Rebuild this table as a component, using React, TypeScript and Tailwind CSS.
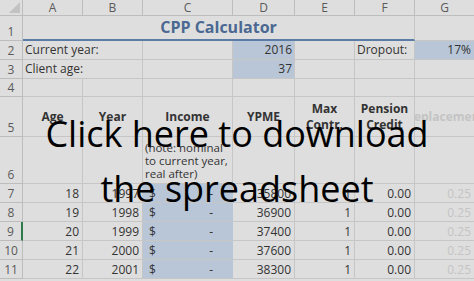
import React from 'react';

const cols = ['A', 'B', 'C', 'D', 'E', 'F', 'G'];

const rows = [
  { n: 7, age: 18, year: 1997, ypme: 35800 },
  { n: 8, age: 19, year: 1998, ypme: 36900 },
  { n: 9, age: 20, year: 1999, ypme: 37400 },
  { n: 10, age: 21, year: 2000, ypme: 37600 },
  { n: 11, age: 22, year: 2001, ypme: 38300 },
];

function Cell({ className = '', children }: { className?: string; children?: React.ReactNode }) {
  return <div className={`border-r border-b border-[#c6c6c6] overflow-hidden ${className}`}>{children}</div>;
}

function RowHead({ n, active }: { n: number; active?: boolean }) {
  return (
    <div
      className={`flex items-end justify-center pb-[2px] border-b border-r border-[#bdbdbd] text-[#5a5a5a] text-[12px] ${
        active ? 'border-r-2 border-r-[#2f7a4b]' : ''
      }`}>
      {n}
    </div>
  );
}

export default function App() {
  return (
    <div className="relative w-[474px] h-[281px] overflow-hidden bg-[#dedede] font-['Open_Sans',sans-serif] text-[12px] leading-none text-[#333]">
      <div className="grid grid-cols-[23px_60px_60px_90px_62px_60px_60px_60px] grid-rows-[16px_25px_19px_19px_18px_40px_47px_19px_19px_19px_19px_19px_19px]">
        {/* column headers */}
        <div className="relative border-r border-b border-[#bdbdbd]">
          <svg className="absolute right-[2px] bottom-[2px]" width="11" height="11" viewBox="0 0 11 11">
            <polygon points="11,0 11,11 0,11" fill="#c2c2c2" />
          </svg>
        </div>
        {cols.map((c) => (
          <div
            key={c}
            className="flex items-center justify-center border-r border-b border-[#bdbdbd] text-[#5a5a5a] text-[12px]">
            {c}
          </div>
        ))}

        {/* row 1 */}
        <RowHead n={1} />
        <div className="col-span-6 flex items-end justify-center pb-[4px] border-r border-b-2 border-b-[#5b7ca6] border-r-[#c6c6c6] font-bold text-[16px] text-[#4a6891]">
          CPP Calculator
        </div>
        <Cell />

        {/* row 2 */}
        <RowHead n={2} />
        <Cell className="col-span-2 flex items-end pl-[2px] pb-[3px]">Current year:</Cell>
        <Cell />
        <Cell className="bg-[#b8c6d8] flex items-end justify-end pr-[2px] pb-[3px]">2016</Cell>
        <Cell />
        <Cell className="flex items-end pl-[2px] pb-[3px]">Dropout:</Cell>
        <Cell className="bg-[#b8c6d8] flex items-end justify-end pr-[3px] pb-[3px]">17%</Cell>

        {/* row 3 */}
        <RowHead n={3} />
        <Cell className="col-span-2 flex items-end pl-[2px] pb-[3px]">Client age:</Cell>
        <Cell />
        <Cell className="bg-[#b8c6d8] flex items-end justify-end pr-[2px] pb-[3px]">37</Cell>
        <Cell />
        <Cell />
        <Cell />

        {/* row 4 */}
        <RowHead n={4} />
        {cols.map((c) => (
          <Cell key={c} />
        ))}

        {/* row 5 */}
        <RowHead n={5} />
        <Cell className="flex items-center justify-center font-bold">Age</Cell>
        <Cell className="flex items-center justify-center font-bold">Year</Cell>
        <Cell className="flex items-center justify-center font-bold">Income</Cell>
        <Cell className="flex items-center justify-center font-bold">YPME</Cell>
        <Cell className="flex flex-col items-center justify-center gap-[4px] font-bold">
          <span>Max</span>
          <span>Contr.</span>
        </Cell>
        <Cell className="flex flex-col items-center justify-center gap-[4px] font-bold">
          <span>Pension</span>
          <span>Credit</span>
        </Cell>
        <Cell className="flex items-center font-bold text-[#c4c4c4]">
          <span className="ml-[-9px] whitespace-nowrap">Replacement</span>
        </Cell>

        {/* row 6 */}
        <RowHead n={6} />
        <Cell />
        <Cell />
        <Cell className="flex flex-col justify-end pl-[2px] pb-[3px] text-[11.5px] leading-[13px] whitespace-nowrap">
          <span>(note: nominal</span>
          <span>to current year,</span>
          <span>real after)</span>
        </Cell>
        <Cell />
        <Cell />
        <Cell />
        <Cell />

        {/* data rows */}
        {rows.map((r) => (
          <React.Fragment key={r.n}>
            <RowHead n={r.n} active={r.n === 9} />
            <Cell className="flex items-end justify-end pr-[3px] pb-[2px]">{r.age}</Cell>
            <Cell className="flex items-end justify-end pr-[3px] pb-[2px]">{r.year}</Cell>
            <Cell className="bg-[#b8c6d8] border-r-[#b8c6d8] flex items-end justify-between pl-[6px] pr-[19px] pb-[2px]">
              <span>$</span>
              <span>-</span>
            </Cell>
            <Cell className="flex items-end justify-end pr-[3px] pb-[2px]">{r.ypme}</Cell>
            <Cell className="flex items-end justify-end pr-[3px] pb-[2px]">1</Cell>
            <Cell className="flex items-end justify-end pr-[3px] pb-[2px]">0.00</Cell>
            <Cell className="flex items-end justify-end pr-[3px] pb-[2px] text-[#c4c4c4]">0.25</Cell>
          </React.Fragment>
        ))}
      </div>

      {/* download overlay */}
      <div className="absolute left-0 right-0 top-[106px] flex flex-col items-center text-black text-[36px] leading-[55px] font-['Open_Sans',sans-serif]">
        <span>Click here to download</span>
        <span>the spreadsheet</span>
      </div>
    </div>
  );
}
